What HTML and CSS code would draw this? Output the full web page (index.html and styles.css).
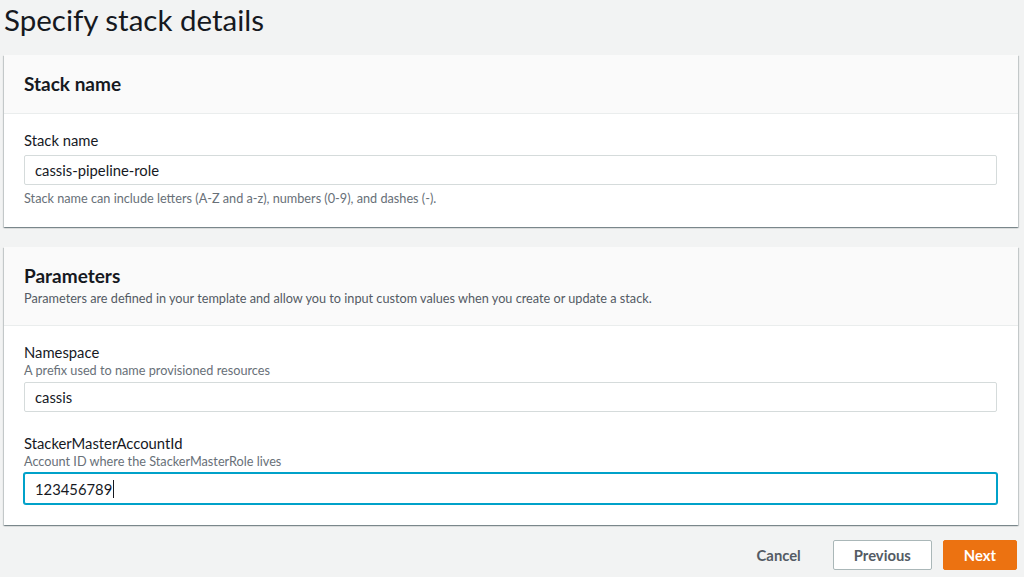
FILE: index.html
```html
<!DOCTYPE html>
<html lang="en">
<head>
<meta charset="utf-8">
<title>Specify stack details</title>
<link rel="stylesheet" href="styles.css">
</head>
<body>
<div class="page">
  <h1 class="page-title">Specify stack details</h1>

  <section class="card">
    <header class="card-header">
      <h2 class="card-title">Stack name</h2>
    </header>
    <div class="card-body card-body-first">
      <div class="field">
        <label class="field-label">Stack name</label>
        <div class="input input-after-label">cassis-pipeline-role</div>
        <p class="field-hint">Stack name can include letters (A-Z and a-z), numbers (0-9), and dashes (-).</p>
      </div>
    </div>
  </section>

  <section class="card">
    <header class="card-header">
      <h2 class="card-title">Parameters</h2>
      <p class="card-desc">Parameters are defined in your template and allow you to input custom values when you create or update a stack.</p>
    </header>
    <div class="card-body">
      <div class="field">
        <label class="field-label">Namespace</label>
        <p class="field-desc">A prefix used to name provisioned resources</p>
        <div class="input">cassis</div>
      </div>
      <div class="field">
        <label class="field-label">StackerMasterAccountId</label>
        <p class="field-desc">Account ID where the StackerMasterRole lives</p>
        <div class="input input-focused">123456789<span class="caret"></span></div>
      </div>
    </div>
  </section>

  <footer class="actions">
    <button class="btn btn-link">Cancel</button>
    <button class="btn btn-normal">Previous</button>
    <button class="btn btn-primary">Next</button>
  </footer>
</div>
</body>
</html>
```

FILE: styles.css
```css
html, body {
  margin: 0;
  padding: 0;
  background: #f2f3f3;
}

body {
  font-family: Lato, "Liberation Sans", Arial, sans-serif;
  color: #16191f;
}

.page {
  padding: 0 6px 0 4px;
}

.page-title {
  margin: 0;
  height: 55px;
  font-size: 29.5px;
  line-height: 39px;
  font-weight: 400;
  color: #16191f;
}

.card {
  background: #ffffff;
  box-shadow: 0 1px 1px 0 rgba(0, 28, 36, 0.3), 1px 1px 1px 0 rgba(0, 28, 36, 0.15), -1px 1px 1px 0 rgba(0, 28, 36, 0.15);
  margin-bottom: 20px;
}

.card-header {
  background: #fafafa;
  border-bottom: 1px solid #eaeded;
  padding: 18px 20px;
}

.card-title {
  margin: 0;
  font-size: 19px;
  line-height: 22px;
  font-weight: 700;
}

.card-desc {
  margin: 2px 0 0;
  font-size: 12.7px;
  line-height: 18px;
  color: #545b64;
}

.card-body {
  padding: 16px 21px 21px 20px;
  display: flex;
  flex-direction: column;
  gap: 21px;
}

.card-body-first {
  padding-top: 16px;
  padding-bottom: 20px;
}

.field {
  display: flex;
  flex-direction: column;
}

.field-label {
  font-size: 14.8px;
  line-height: 20px;
  color: #16191f;
}

.field-desc {
  margin: 0;
  font-size: 12.7px;
  line-height: 16px;
  color: #687078;
}

.field-hint {
  margin: 4px 0 0;
  font-size: 12.7px;
  line-height: 18px;
  color: #687078;
}

.input {
  margin-top: 4px;
  height: 30px;
  box-sizing: border-box;
  border: 1px solid #d5dbdb;
  border-radius: 2px;
  padding: 0 10px;
  font-size: 14.8px;
  line-height: 28px;
  color: #16191f;
  background: #ffffff;
  display: flex;
  align-items: center;
}

.input-after-label {
  margin-top: 5px;
}

.input-focused {
  height: 31px;
  border-color: #00a1c9;
  box-shadow: 0 0 0 1px #00a1c9;
}

.caret {
  display: inline-block;
  width: 1px;
  height: 18px;
  background: #16191f;
  margin-left: 1px;
}

.actions {
  display: flex;
  justify-content: flex-end;
  gap: 11px;
  padding: 0 1px 0 0;
  margin-top: -5px;
}

.btn {
  font-family: inherit;
  font-size: 14.8px;
  font-weight: 700;
  height: 30px;
  padding: 0 20px;
  border-radius: 2px;
  border: 1px solid transparent;
  background: transparent;
  color: #545b64;
  cursor: pointer;
}

.btn-normal {
  background: #ffffff;
  border-color: #aab7b8;
}

.btn-primary {
  background: #ec7211;
  border-color: #ec7211;
  color: #ffffff;
}
```
